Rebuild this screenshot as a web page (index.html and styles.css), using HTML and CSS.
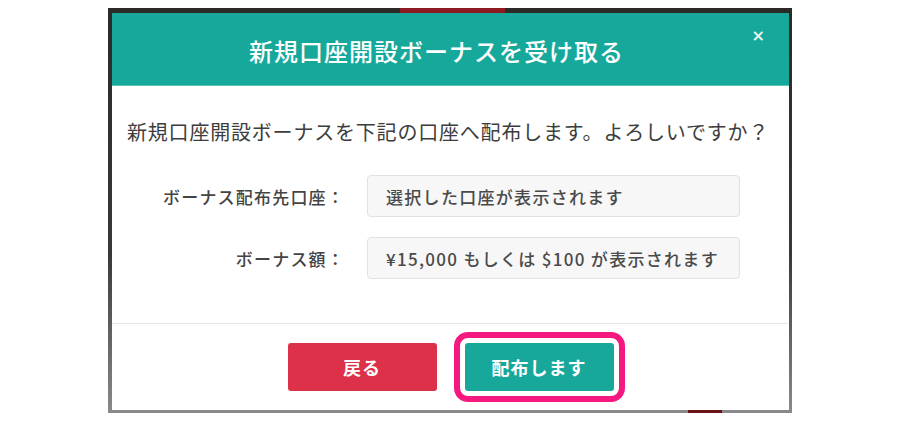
FILE: index.html
```html
<!DOCTYPE html>
<html lang="ja">
<head>
<meta charset="utf-8">
<title>新規口座開設ボーナスを受け取る</title>
<link rel="stylesheet" href="styles.css">
</head>
<body>
<div class="frame">
  <div class="modal">
    <div class="modal-header">
      <h1 class="modal-title">新規口座開設ボーナスを受け取る</h1>
      <span class="close">×</span>
    </div>
    <div class="modal-body">
      <p class="question">新規口座開設ボーナスを下記の口座へ配布します。よろしいですか？</p>
      <div class="form-row">
        <span class="label">ボーナス配布先口座：</span>
        <div class="field">選択した口座が表示されます</div>
      </div>
      <div class="form-row">
        <span class="label">ボーナス額：</span>
        <div class="field">¥15,000 もしくは $100 が表示されます</div>
      </div>
    </div>
    <div class="modal-footer">
      <button class="btn btn-back">戻る</button>
      <button class="btn btn-ok">配布します</button>
    </div>
  </div>
</div>
</body>
</html>
```

FILE: styles.css
```css
* { box-sizing: border-box; }
html, body { margin: 0; padding: 0; background: #fff; }
body {
  font-family: "Noto Sans CJK JP", "Noto Sans", sans-serif;
  width: 900px;
  height: 423px;
  overflow: hidden;
}
.frame {
  margin: 8px 0 0 108px;
  width: 684px;
  height: 405px;
  padding: 5px 3px 3px 4px;
  background:
    linear-gradient(to right, transparent 0, transparent 292px, #8e1b22 292px, #8e1b22 397px, transparent 397px) top / 100% 5px no-repeat,
    linear-gradient(to right, transparent 0, transparent 580px, #6b1218 580px, #6b1218 614px, transparent 614px) bottom / 100% 3px no-repeat,
    linear-gradient(to bottom, #2c2a26 0, #3a3835 60%, #8a8a8a 100%);
}
.modal {
  width: 677px;
  height: 397px;
  background: #fff;
  display: flex;
  flex-direction: column;
}
.modal-header {
  position: relative;
  height: 73px;
  flex: none;
  background: #16a99b;
  border-bottom: 1px solid #5cc8bd;
  display: flex;
  align-items: center;
  justify-content: center;
  padding-right: 28px;
}
.modal-title {
  margin: 0;
  color: #fff;
  font-size: 24px;
  font-weight: 500;
  letter-spacing: 1px;
  padding-top: 2px;
}
.close {
  position: absolute;
  right: 24px;
  top: 13px;
  color: #e8f7f5;
  font-size: 16px;
  font-weight: 700;
  font-family: "DejaVu Sans", sans-serif;
}
.modal-body {
  padding: 31px 49px 44px 15px;
  border-bottom: 1px solid #e6e6e6;
}
.question {
  margin: 0 -49px 28px 0;
  white-space: nowrap;
  font-size: 20px;
  line-height: 30px;
  letter-spacing: 0.8px;
  color: #3d3d3d;
}
.form-row {
  display: flex;
  align-items: center;
  gap: 22px;
}
.form-row + .form-row { margin-top: 20px; }
.label {
  width: 218px;
  text-align: right;
  font-size: 17px;
  font-weight: 500;
  letter-spacing: 1.2px;
  color: #444;
}
.field {
  flex: 1;
  height: 42px;
  display: flex;
  align-items: center;
  padding-left: 18px;
  background: #f7f7f7;
  border: 1px solid #e2e2e2;
  border-radius: 4px;
  font-size: 17px;
  font-weight: 500;
  letter-spacing: 1.3px;
  color: #4a4a4a;
  white-space: nowrap;
}
.modal-footer {
  display: flex;
  justify-content: center;
  gap: 28px;
  padding-top: 19px;
}
.btn {
  width: 149px;
  height: 48px;
  border: none;
  border-radius: 3px;
  color: #fff;
  font-family: "Noto Sans CJK JP", sans-serif;
  font-size: 18px;
  font-weight: 700;
  letter-spacing: 1px;
}
.btn-back { background: #dc3148; }
.btn-ok {
  background: #17a89b;
  outline: 6px solid #f5197f;
  outline-offset: 5px;
}
```
